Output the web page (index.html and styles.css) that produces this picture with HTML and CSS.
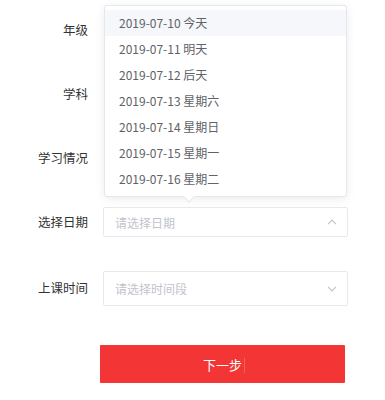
FILE: index.html
```html
<!DOCTYPE html>
<html lang="zh-CN">
<head>
<meta charset="utf-8">
<title>选择日期</title>
<link rel="stylesheet" href="styles.css">
</head>
<body>
<div class="page">
  <form class="form">
    <div class="row"><label class="label">年级</label><div class="control blank"></div></div>
    <div class="row"><label class="label">学科</label><div class="control blank"></div></div>
    <div class="row"><label class="label">学习情况</label><div class="control blank"></div></div>
    <div class="row"><label class="label">选择日期</label>
      <div class="control select">
        <span class="placeholder">请选择日期</span>
        <svg class="chev" width="10" height="6" viewBox="0 0 10 6"><path d="M1 5.2 L5 1.2 L9 5.2" fill="none" stroke="#c0c4cc" stroke-width="1.2"/></svg>
      </div>
    </div>
    <div class="row tall"><label class="label">上课时间</label>
      <div class="control select">
        <span class="placeholder">请选择时间段</span>
        <svg class="chev" width="10" height="6" viewBox="0 0 10 6"><path d="M1 0.8 L5 4.8 L9 0.8" fill="none" stroke="#c0c4cc" stroke-width="1.2"/></svg>
      </div>
    </div>
    <div class="actions">
      <button type="button" class="btn">下一步<span class="caret"></span></button>
    </div>
  </form>

  <div class="dropdown">
    <ul class="list">
      <li class="item hover">2019-07-10 今天</li>
      <li class="item">2019-07-11 明天</li>
      <li class="item">2019-07-12 后天</li>
      <li class="item">2019-07-13 星期六</li>
      <li class="item">2019-07-14 星期日</li>
      <li class="item">2019-07-15 星期一</li>
      <li class="item">2019-07-16 星期二</li>
    </ul>
    <span class="arrow"></span>
  </div>
</div>
</body>
</html>
```
FILE: styles.css
```css
* { box-sizing: border-box; }
html, body { margin: 0; padding: 0; background: #fff; }
body {
  font-family: "Noto Sans CJK SC", "Noto Sans", sans-serif;
  width: 385px;
  height: 400px;
  overflow: hidden;
}
.page { position: relative; width: 385px; height: 400px; }
.form {
  display: flex;
  flex-direction: column;
  gap: 34px;
  padding-top: 15px;
}
.row {
  display: flex;
  align-items: center;
  height: 30px;
}
.row.tall { height: 35px; }
.label {
  width: 88px;
  text-align: right;
  font-size: 12.5px;
  color: #333;
  margin-right: 15px;
  line-height: 1;
}
.control {
  width: 245px;
  height: 100%;
}
.select {
  border: 1px solid #e8e9ec;
  border-radius: 2px;
  display: flex;
  align-items: center;
  justify-content: space-between;
  padding: 0 10px 0 11px;
}
.placeholder {
  font-size: 12px;
  color: #c0c4cc;
}
.chev { display: block; }
.actions {
  padding-left: 100px;
  margin-top: 5px;
}
.btn {
  position: relative;
  width: 245px;
  height: 38px;
  border: 0;
  border-radius: 1px;
  background: #f33535;
  color: #fff;
  font-family: inherit;
  font-size: 13px;
  padding: 0;
}
.caret {
  position: absolute;
  left: 144px;
  top: 13px;
  width: 1px;
  height: 15px;
  background: rgba(200, 200, 200, 0.35);
}
.dropdown {
  position: absolute;
  left: 104px;
  top: 5px;
  width: 243px;
  height: 192px;
  background: #fff;
  border: 1px solid #e4e7ed;
  border-radius: 3px;
  box-shadow: 0 2px 10px rgba(0, 0, 0, 0.08);
}
.list {
  list-style: none;
  margin: 0;
  padding: 4px 0;
}
.item {
  height: 26px;
  line-height: 26px;
  padding-left: 14px;
  font-size: 12px;
  color: #606266;
}
.item.hover { background: #f5f7fa; }
.arrow {
  position: absolute;
  left: 80px;
  bottom: -5px;
  width: 8px;
  height: 8px;
  background: #fff;
  border-right: 1px solid #e4e7ed;
  border-bottom: 1px solid #e4e7ed;
  transform: rotate(45deg);
}
```
